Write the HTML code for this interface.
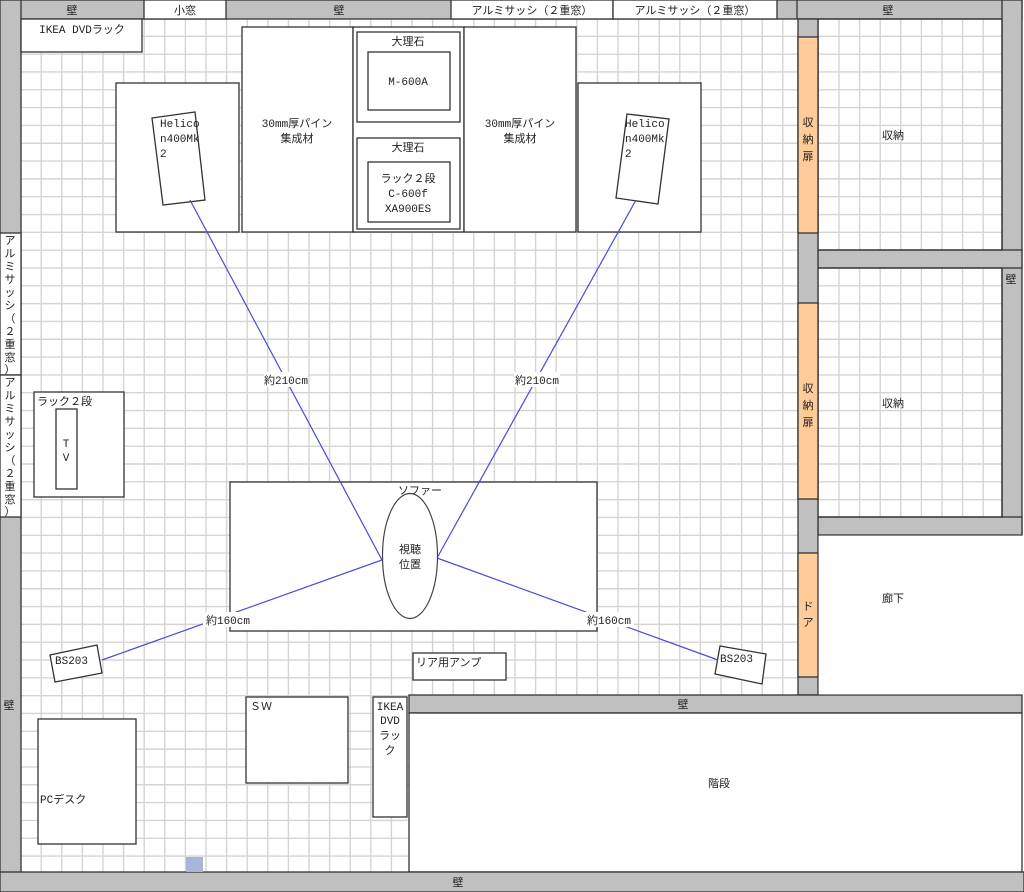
<!DOCTYPE html>
<html><head><meta charset="utf-8"><style>
html,body{margin:0;padding:0;background:#fff}
svg{display:block}
text{font-family:"Liberation Mono","Noto Sans CJK JP",monospace;font-size:11px;fill:#222}
</style></head><body>
<svg width="1024" height="892" viewBox="0 0 1024 892" xmlns="http://www.w3.org/2000/svg">
<rect x="0" y="0" width="1024" height="892" fill="#fff"/>
<path stroke="#d4d4d4" stroke-width="1.4" fill="none" d="
M41.2 19V872M61.8 19V872M82.4 19V872M103 19V872M123.6 19V872M144.2 19V872M164.8 19V872M185.4 19V872M206 19V872M226.6 19V872
M247.2 19V872M267.8 19V872M288.4 19V872M309 19V872M329.6 19V872M350.2 19V872M370.8 19V872M391.4 19V872M412 19V872M432.6 19V872
M453.2 19V872M473.8 19V872M494.4 19V872M515 19V872M535.6 19V872M556.2 19V872M576.8 19V872M597.4 19V872M618 19V872M638.6 19V872
M659.2 19V872M679.8 19V872M700.4 19V872M721 19V872M741.6 19V872M762.2 19V872M782.8 19V872M839 19V872M859.6 19V872M880.2 19V872
M900.8 19V872M921.4 19V872M942 19V872M962.6 19V872M983.2 19V872
M21 36.32H1002M21 54.14H1002M21 71.96H1002M21 89.78H1002M21 107.6H1002M21 125.42H1002M21 143.24H1002M21 161.06H1002M21 178.88H1002
M21 196.7H1002M21 214.52H1002M21 232.34H1002M21 250.16H1002M21 267.98H1002M21 285.8H1002M21 303.62H1002M21 321.44H1002M21 339.26H1002
M21 357.08H1002M21 374.9H1002M21 392.72H1002M21 410.54H1002M21 428.36H1002M21 446.18H1002M21 464H1002M21 481.82H1002M21 499.64H1002
M21 517.46H1002M21 535.28H1002M21 553.1H1002M21 570.92H1002M21 588.74H1002M21 606.56H1002M21 624.38H1002M21 642.2H1002M21 660.02H1002
M21 677.84H1002M21 695.66H1002M21 713.48H1002M21 731.3H1002M21 749.12H1002M21 766.94H1002M21 784.76H1002M21 802.58H1002M21 820.4H1002
M21 838.22H1002M21 856.04H1002"/>
<g stroke="#333" stroke-width="1.3">
<rect x="0" y="0" width="1022" height="19" fill="#c0c0c0"/>
<rect x="144" y="0" width="82" height="19" fill="#fff"/>
<rect x="451" y="0" width="162" height="19" fill="#fff"/>
<rect x="613" y="0" width="164" height="19" fill="#fff"/>
<line x1="797" y1="0" x2="797" y2="19"/>
<rect x="0" y="0" width="21" height="892" fill="#c0c0c0"/>
<rect x="0" y="233" width="21" height="142" fill="#fff"/>
<rect x="0" y="375" width="21" height="142" fill="#fff"/>
<rect x="1002" y="0" width="20" height="535" fill="#c0c0c0"/>
<rect x="818" y="250" width="204" height="18" fill="#c0c0c0"/>
<rect x="818" y="517" width="204" height="18" fill="#c0c0c0"/>
<rect x="818" y="19" width="184" height="231" fill="none"/>
<rect x="818" y="268" width="184" height="249" fill="none"/>
<rect x="798" y="19" width="20" height="676" fill="#c0c0c0"/>
<rect x="798" y="37" width="20" height="196" fill="#ffcc99"/>
<rect x="798" y="303" width="20" height="196" fill="#ffcc99"/>
<rect x="798" y="553" width="20" height="124" fill="#ffcc99"/>
<rect x="409" y="695" width="613" height="18" fill="#c0c0c0"/>
<rect x="409" y="713" width="613" height="159" fill="#fff"/>
<rect x="0" y="872" width="1024" height="20" fill="#c0c0c0"/>
</g>
<rect x="818.7" y="535.7" width="205" height="158.6" fill="#fff"/>
<rect x="186" y="857" width="17" height="15" fill="#aab4d6"/>
<g stroke="#333" stroke-width="1.3" fill="#fff">
<rect x="21" y="19" width="121" height="33"/>
<rect x="116" y="83" width="123" height="149"/>
<rect x="578" y="83" width="123" height="149"/>
<rect x="242" y="27" width="111" height="205"/>
<rect x="353" y="27" width="111" height="205"/>
<rect x="464" y="27" width="112" height="205"/>
<rect x="357" y="32" width="103" height="90"/>
<rect x="368" y="52" width="82" height="58"/>
<rect x="357" y="138" width="103" height="91"/>
<rect x="368" y="162" width="82" height="60"/>
<polygon points="152,118 195,112 205,200 163,205"/>
<polygon points="627,114 669,119 658,204 616,198"/>
<rect x="34" y="392" width="90" height="105"/>
<rect x="56" y="409" width="21" height="80"/>
<rect x="230" y="482" width="367" height="149"/>
<polygon points="50,655 97,645 102,673 55,682"/>
<polygon points="720,646 766,654 762,684 715,674"/>
<rect x="413" y="653" width="93" height="27"/>
<rect x="246" y="697" width="102" height="86"/>
<rect x="373" y="697" width="34" height="120"/>
<rect x="38" y="719" width="98" height="125"/>
</g>
<g stroke="#4a4ad8" stroke-width="1.2">
<line x1="190" y1="200" x2="382" y2="560"/>
<line x1="636" y1="200" x2="437" y2="558"/>
<line x1="382" y1="560" x2="102" y2="660"/>
<line x1="437" y1="558" x2="718" y2="660"/>
</g>
<text x="420" y="494" text-anchor="middle">ソファー</text>
<ellipse cx="410" cy="556" rx="27.5" ry="62.5" fill="#fff" stroke="#444" stroke-width="1.2"/>
<text x="410" y="553" text-anchor="middle">視聴</text>
<text x="410" y="568" text-anchor="middle">位置</text>
<g fill="#fff">
<rect x="264" y="372" width="44" height="15"/>
<rect x="514" y="372" width="46" height="15"/>
<rect x="203" y="612" width="50" height="15"/>
<rect x="584" y="612" width="50" height="15"/>
</g>
<text x="286" y="384" text-anchor="middle">約210cm</text>
<text x="537" y="384" text-anchor="middle">約210cm</text>
<text x="228" y="624" text-anchor="middle">約160cm</text>
<text x="609" y="624" text-anchor="middle">約160cm</text>
<text x="72" y="14" text-anchor="middle">壁</text>
<text x="185" y="14" text-anchor="middle">小窓</text>
<text x="339" y="14" text-anchor="middle">壁</text>
<text x="532" y="14" text-anchor="middle">アルミサッシ（２重窓）</text>
<text x="695" y="14" text-anchor="middle">アルミサッシ（２重窓）</text>
<text x="888" y="14" text-anchor="middle">壁</text>
<text x="82" y="33" text-anchor="middle">IKEA DVDラック</text>
<text x="160" y="127">Helico</text>
<text x="160" y="142">n400Mk</text>
<text x="160" y="157">2</text>
<text x="625" y="127">Helico</text>
<text x="625" y="142">n400Mk</text>
<text x="625" y="157">2</text>
<text x="297" y="127" text-anchor="middle">30mm厚パイン</text>
<text x="297" y="142" text-anchor="middle">集成材</text>
<text x="520" y="127" text-anchor="middle">30mm厚パイン</text>
<text x="520" y="142" text-anchor="middle">集成材</text>
<text x="408" y="45" text-anchor="middle">大理石</text>
<text x="408" y="85" text-anchor="middle">M-600A</text>
<text x="408" y="151" text-anchor="middle">大理石</text>
<text x="408" y="182" text-anchor="middle">ラック２段</text>
<text x="408" y="197" text-anchor="middle">C-600f</text>
<text x="408" y="212" text-anchor="middle">XA900ES</text>
<text x="37" y="405">ラック２段</text>
<text x="66" y="447" text-anchor="middle">T</text>
<text x="66" y="461" text-anchor="middle">V</text>
<text x="55" y="664">BS203</text>
<text x="720" y="662">BS203</text>
<text x="416" y="666">リア用アンプ</text>
<text x="250" y="710">ＳＷ</text>
<text x="390" y="710" text-anchor="middle">IKEA</text>
<text x="390" y="724" text-anchor="middle">DVD</text>
<text x="390" y="739" text-anchor="middle">ラッ</text>
<text x="390" y="754" text-anchor="middle">ク</text>
<text x="40" y="803">PCデスク</text>
<text x="719" y="787" text-anchor="middle">階段</text>
<text x="683" y="708" text-anchor="middle">壁</text>
<text x="458" y="886" text-anchor="middle">壁</text>
<text x="893" y="602" text-anchor="middle">廊下</text>
<text x="893" y="139" text-anchor="middle">収納</text>
<text x="893" y="407" text-anchor="middle">収納</text>
<text x="1011" y="283" text-anchor="middle">壁</text>
<text x="9" y="709" text-anchor="middle">壁</text>
<g text-anchor="middle">
<text x="808" y="126">収</text><text x="808" y="143">納</text><text x="808" y="160">扉</text>
<text x="808" y="392">収</text><text x="808" y="409">納</text><text x="808" y="426">扉</text>
<text x="808" y="610">ド</text><text x="808" y="626">ア</text>
</g>
<g text-anchor="middle" style="font-size:9px">
<text x="10" y="244">ア</text><text x="10" y="257">ル</text><text x="10" y="270">ミ</text><text x="10" y="283">サ</text><text x="10" y="296">ッ</text><text x="10" y="309">シ</text><text x="10" y="322">（</text><text x="10" y="335">２</text><text x="10" y="348">重</text><text x="10" y="361">窓</text><text x="10" y="373">）</text>
<text x="10" y="386">ア</text><text x="10" y="399">ル</text><text x="10" y="412">ミ</text><text x="10" y="425">サ</text><text x="10" y="438">ッ</text><text x="10" y="451">シ</text><text x="10" y="464">（</text><text x="10" y="477">２</text><text x="10" y="490">重</text><text x="10" y="503">窓</text><text x="10" y="515">）</text>
</g>
</svg>
</body></html>
